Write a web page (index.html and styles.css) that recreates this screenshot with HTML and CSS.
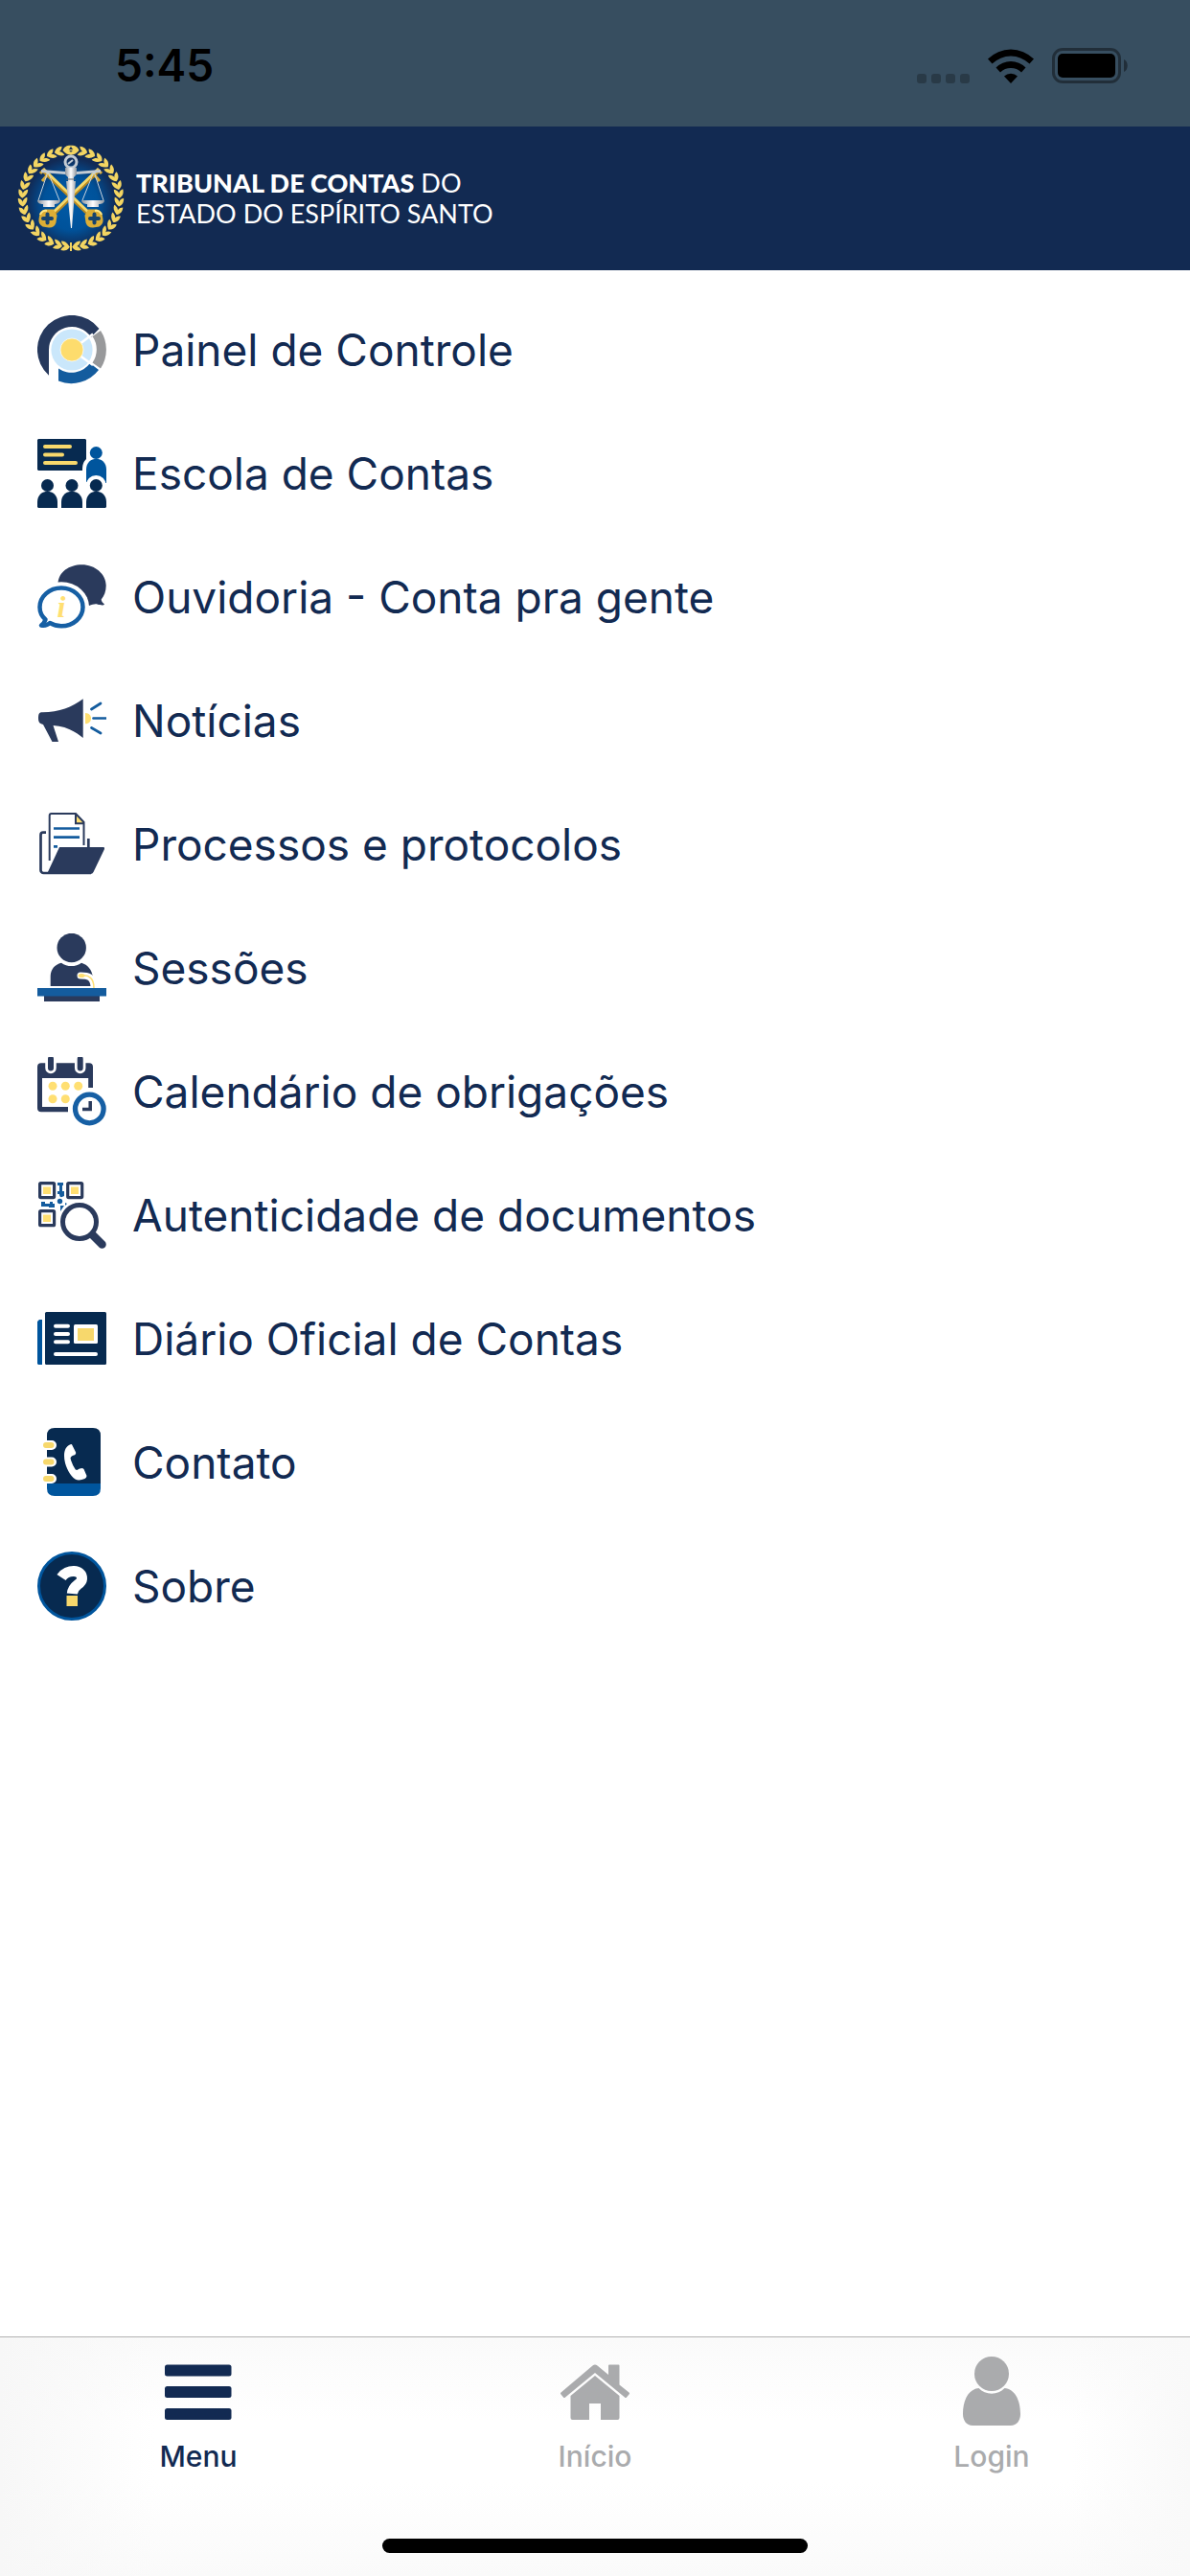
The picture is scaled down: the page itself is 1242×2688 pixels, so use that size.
FILE: index.html
```html
<!DOCTYPE html>
<html lang="pt-BR">
<head>
    <meta charset="UTF-8">
    <meta name="viewport" content="width=device-width, initial-scale=1">
    <title>Tribunal de Contas do Estado do Espírito Santo</title>
    <link rel="stylesheet" href="styles.css">
</head>
<body>
    <div class="status-bar">
        <span class="status-time">5:45</span>
        <div class="status-icons">
            <svg class="signal" viewBox="0 0 55 10" aria-hidden="true">
                <rect x="0" width="10" height="10" rx="3"/>
                <rect x="15" width="10" height="10" rx="3"/>
                <rect x="30" width="10" height="10" rx="3"/>
                <rect x="45" width="10" height="10" rx="3"/>
            </svg>
            <svg class="wifi" viewBox="0 0 48 36" aria-hidden="true">
                <path d="M0 10.500a34 34 0 0 1 48 0l-4.500 5a28 28 0 0 0-39 0z"/>
                <path d="M8.500 19.500a22 22 0 0 1 31 0l-4.500 5a16 16 0 0 0-22 0z"/>
                <path d="M17 28.500a10.500 10.500 0 0 1 14 0l-7 7.500z"/>
            </svg>
            <svg class="battery" viewBox="0 0 80 37" aria-hidden="true">
                <rect class="battery-case" x="1.500" y="1.500" width="69" height="34" rx="9.500"/>
                <rect x="6" y="6" width="60" height="25" rx="5"/>
                <path class="battery-tip" d="M75 12c5 2 5 11 0 13z"/>
            </svg>
        </div>
    </div>

    <header class="header">
        <svg class="emblem" viewBox="0 0 112 112" aria-hidden="true">
            <defs>
                <radialGradient id="disc" cx="50%" cy="55%" r="50%">
                    <stop offset="0" stop-color="#005aa6"/>
                    <stop offset="0.6" stop-color="#00529a"/>
                    <stop offset="1" stop-color="#112a55"/>
                </radialGradient>
                <linearGradient id="silver">
                    <stop offset="0" stop-color="#8e959d"/>
                    <stop offset="0.5" stop-color="#ffffff"/>
                    <stop offset="1" stop-color="#8e959d"/>
                </linearGradient>
                <g id="leaf">
                    <path d="M61 5.500c-2-4-5-5-9-4.500 1 4 5 6 9 4.500z"/>
                    <path d="M61 5.500c-3 4-6 5.500-9.500 5 1-4 5-6.500 9.500-5z"/>
                </g>
                <g id="branch">
                    <use href="#leaf" transform="rotate(4 56 56)"/>
                    <use href="#leaf" transform="rotate(14 56 56)"/>
                    <use href="#leaf" transform="rotate(24 56 56)"/>
                    <use href="#leaf" transform="rotate(34 56 56)"/>
                    <use href="#leaf" transform="rotate(44 56 56)"/>
                    <use href="#leaf" transform="rotate(54 56 56)"/>
                    <use href="#leaf" transform="rotate(64 56 56)"/>
                    <use href="#leaf" transform="rotate(74 56 56)"/>
                    <use href="#leaf" transform="rotate(84 56 56)"/>
                    <use href="#leaf" transform="rotate(94 56 56)"/>
                    <use href="#leaf" transform="rotate(104 56 56)"/>
                    <use href="#leaf" transform="rotate(114 56 56)"/>
                    <use href="#leaf" transform="rotate(124 56 56)"/>
                    <use href="#leaf" transform="rotate(134 56 56)"/>
                    <use href="#leaf" transform="rotate(144 56 56)"/>
                    <use href="#leaf" transform="rotate(154 56 56)"/>
                    <use href="#leaf" transform="rotate(164 56 56)"/>
                    <use href="#leaf" transform="rotate(173 56 56)"/>
                </g>
                <g id="key">
                    <path d="M37 73L86 26" stroke="#b98a22" stroke-width="4"/>
                    <path d="M36 72L85 25" stroke="#f5d96b" stroke-width="3"/>
                    <path d="M80 31l6 7M84 26l4 4" stroke="#d9ac3a" stroke-width="3"/>
                    <path d="M25 72a6 6 0 0 1 6-3l6 0 3 5-1 7a6 6 0 0 1-6 4l-6-1a6 6 0 0 1-3-6z" fill="#dcae36" stroke="#dcae36" stroke-width="3"/>
                    <path d="M24 73a6 6 0 0 1 7-4" fill="none" stroke="#ffe98a" stroke-width="2"/>
                    <path d="M27 77h9M31.500 72.500v9" stroke="#16436e" stroke-width="4" stroke-linecap="round"/>
                </g>
                <g id="pan">
                    <path d="M32 28L22 58M32 28L44 58" stroke="#c8d3dd" stroke-width="1"/>
                    <path d="M21 58h24c0 3-4 4-6 4v3H27v-3c-3 0-6-1-6-4z" fill="url(#silver)"/>
                </g>
            </defs>
            <circle cx="56" cy="56" r="47" fill="url(#disc)"/>
            <g fill="#f3d562">
                <use href="#branch"/>
                <use href="#branch" transform="translate(112 0) scale(-1 1)"/>
                <path d="M51 5h10v1H51zM55 102h2v9h-2z"/>
            </g>
            <use href="#key"/>
            <use href="#key" transform="translate(112 0) scale(-1 1)"/>
            <use href="#pan"/>
            <use href="#pan" transform="translate(112 0) scale(-1 1)"/>
            <path d="M25 26l25 2h12l25-2v3l-25 2H50l-25-2z" fill="#c3cbd3"/>
            <circle cx="56" cy="18" r="6" fill="none" stroke="#c3cbd3" stroke-width="3"/>
            <path d="M53 20l5-4" stroke="#c3cbd3" stroke-width="2"/>
            <path d="M50 24h12v7l-3 3v4h2l-4 49h-1l-5-49h2v-4l-3-3z" fill="url(#silver)"/>
            <path d="M51 36h10" stroke="#57616c" stroke-width="1"/>
        </svg>
        <h1 class="brand"><span><strong>TRIBUNAL DE CONTAS</strong> DO</span><span>ESTADO DO ESPÍRITO SANTO</span></h1>
    </header>

    <main class="content">
        <ul class="menu">
            <li><a href="#painel">
                <svg class="icon" viewBox="0 0 72 72" aria-hidden="true">
                    <path fill="#26395d" d="M64.500 14A36 36 0 1 0 12 62.800V36a24 24 0 0 1 44-13.300z"/>
                    <path fill="#98999b" d="M66 16a36 36 0 0 1 0 39.500l-8.500-6a24 24 0 0 0 0-27.500z"/>
                    <path fill="#145c9e" d="M22 55.500v13A36 36 0 0 0 64 57l-9-7a24 24 0 0 1-33 5.500z"/>
                    <circle cx="36" cy="36" r="21.600" fill="#cae7fb"/>
                    <path d="M36 36l22-16.500M36 36l22 16" stroke="#fff" stroke-width="2.500"/>
                    <circle cx="36" cy="36" r="12" fill="#fddc6d" stroke="#fff" stroke-width="0.700"/>
                </svg>
                <span>Painel de Controle</span>
            </a></li>
            <li><a href="#escola">
                <svg class="icon" viewBox="0 0 72 72" aria-hidden="true">
                    <path fill="#072a50" d="M1 0h49l1 1v20c-3 3-4 6-4 12H1l-1-1V1z"/>
                    <path d="M8 8h26M8 16.500h18M8 25h32" stroke="#f7d86c" stroke-width="4" stroke-linecap="round"/>
                    <g fill="#00559d">
                        <circle cx="61.300" cy="14.500" r="6.500"/>
                        <path d="M51 45V32c0-15 21-15 21 0v14z"/>
                    </g>
                    <circle cx="61.300" cy="48.500" r="10.500" fill="#fff"/>
                    <g fill="#072a50">
                        <circle cx="10.500" cy="48.500" r="6.500"/>
                        <circle cx="36" cy="48.500" r="6.500"/>
                        <circle cx="61.300" cy="48.500" r="6.500"/>
                        <path d="M0 71v-5c0-15 21-15 21 0v6H1z"/>
                        <path d="M25 72v-6c0-15 22-15 22 0v6z"/>
                        <path d="M51 72v-6c0-15 21-15 21 0v5l-1 1z"/>
                    </g>
                </svg>
                <span>Escola de Contas</span>
            </a></li>
            <li><a href="#ouvidoria">
                <svg class="icon" viewBox="0 0 72 72" aria-hidden="true">
                    <path fill="#2a3a5c" d="M21.500 22C22 10 33 2.300 46.500 2.300S71.700 12 71.700 24c0 6-2 11-5 14.500 0 2 2 4 3.300 5-1 1.500-4 1-7.500 0-3-.5-5 .5-8.500 1.500z"/>
                    <ellipse cx="25" cy="46.300" rx="29" ry="26" fill="#fff"/>
                    <path fill="none" stroke="#165fa4" stroke-width="4.500" stroke-linejoin="round" d="M25 26.500c-12.500 0-22.500 9-22.500 20 0 5 2 9.500 6 13-1 3-3 5-4.500 6 3 .5 7-.5 9-2.500 4 2.300 8 3.300 12 3.300 12.500 0 22.500-9 22.500-19.800S37.500 26.500 25 26.500z"/>
                    <text x="25" y="57" class="icon-letter">i</text>
                </svg>
                <span>Ouvidoria - Conta pra gente</span>
            </a></li>
            <li><a href="#noticias">
                <svg class="icon" viewBox="0 0 72 72" aria-hidden="true">
                    <path fill="#2a3a5c" d="M4 27.200c18 .3 32-5 43.700-13.900V54C38 46 28 41.500 16.500 41L22 58h-6.500L6 40C2 39 1 37 1 33s1-5.500 3-5.800z"/>
                    <path fill="#ffdf72" d="M50 28c8 0 8 11.300 0 11.300z"/>
                    <path d="M56.500 24l9.500-6M58.500 33.500h13M56.500 43.500l9.500 5.500" stroke="#145c9e" stroke-width="2.700" stroke-linecap="round"/>
                </svg>
                <span>Notícias</span>
            </a></li>
            <li><a href="#processos">
                <svg class="icon" viewBox="0 0 72 72" aria-hidden="true">
                    <path fill="#ffdf72" d="M40 5v9h9z"/>
                    <g fill="none" stroke="#2a3a5c">
                        <path stroke-width="2" d="M12.700 53V6a2 2 0 0 1 2-2H40l8.500 9v24M40 4v10.300h9"/>
                        <path stroke-width="2.700" d="M9 23.700H6a2.500 2.500 0 0 0-2.500 2.500V63a3 3 0 0 0 3 3H56M53.300 30v9"/>
                    </g>
                    <path d="M17 19.500h27M17 28.700h27M17 38.300h4" stroke="#145c9e" stroke-width="2.700"/>
                    <path fill="#2a3a5c" d="M23 39h46q1.500 0 1 2L58.500 65q-1 2-3 2H10z"/>
                </svg>
                <span>Processos e protocolos</span>
            </a></li>
            <li><a href="#sessoes">
                <svg class="icon" viewBox="0 0 72 72" aria-hidden="true">
                    <circle cx="35.700" cy="15" r="15.200" fill="#2a3a5c"/>
                    <path fill="#2a3a5c" d="M25 30.700c6 4.500 15 4.500 21 0 7 2 11 8 11.700 14L56 55H13.700V45c0-7 4-12.500 11.300-14.300z"/>
                    <path fill="none" stroke="#fff" stroke-width="7" stroke-linecap="round" d="M45 44c8 0 13 1 14 11"/>
                    <path fill="none" stroke="#ffdf72" stroke-width="1.500" d="M46 44c8-1 13 3 13 13"/>
                    <ellipse cx="46" cy="44" rx="3.500" ry="2" fill="#ffdf72"/>
                    <path fill="#2a3a5c" d="M7 65h58v6H7z"/>
                    <path fill="#145c9e" d="M0 57h72v8.500H0z"/>
                </svg>
                <span>Sessões</span>
            </a></li>
            <li><a href="#calendario">
                <svg class="icon" viewBox="0 0 72 72" aria-hidden="true">
                    <path fill="#2a3a5c" fill-rule="evenodd" d="M4 6.300h50q4 0 4 4V32h-4.800V22H5v30h27v5.300H4q-4 0-4-4v-43q0-4 4-4z"/>
                    <path d="M14 3v8.500M44.700 3v8.500" stroke="#fff" stroke-width="11.500" stroke-linecap="round"/>
                    <path d="M14 2v9.500M44.700 2v9.500" stroke="#2a3a5c" stroke-width="6" stroke-linecap="round"/>
                    <g fill="#ffdf72">
                        <circle cx="16" cy="30.300" r="4.500"/>
                        <circle cx="29.300" cy="30.300" r="4.500"/>
                        <circle cx="42.700" cy="30.300" r="4.500"/>
                        <circle cx="16" cy="43.700" r="4.500"/>
                        <circle cx="29.300" cy="43.700" r="4.500"/>
                    </g>
                    <circle cx="54.300" cy="54" r="14.800" fill="#fff" stroke="#165fa4" stroke-width="5.300"/>
                    <path fill="none" stroke="#2a3a5c" stroke-width="3.500" d="M55.200 46v8.500H47"/>
                </svg>
                <span>Calendário de obrigações</span>
            </a></li>
            <li><a href="#autenticidade">
                <svg class="icon" viewBox="0 0 72 72" aria-hidden="true">
                    <g fill="none" stroke="#2a3a5c" stroke-width="3.200">
                        <rect x="2.600" y="2.600" width="15" height="15" rx="1"/>
                        <rect x="31.700" y="2.600" width="15" height="15" rx="1"/>
                        <rect x="2.600" y="31.700" width="15" height="15" rx="1"/>
                    </g>
                    <g fill="#ffdf72">
                        <rect x="6" y="6.500" width="8" height="7.500"/>
                        <rect x="35" y="6.500" width="8" height="7.500"/>
                        <rect x="6" y="35.500" width="8" height="7.500"/>
                    </g>
                    <g fill="#145c9e">
                        <path d="M21 2h6v3h-1v6h2v5q-5 3-5-2h-2v-3h2V5h-2z"/>
                        <path d="M4 22h4v2h5v-2h3v2h2v4h-6v-1H4z"/>
                        <circle cx="23.500" cy="21.500" r="2.700"/>
                        <path d="M24 26h4l-4 6zM29 23l2 1-2 2z"/>
                    </g>
                    <path d="M58 57l9.500 9.500" stroke="#2a3a5c" stroke-width="8.500" stroke-linecap="round"/>
                    <circle cx="44" cy="43" r="17.500" fill="#fff" stroke="#2a3a5c" stroke-width="5"/>
                </svg>
                <span>Autenticidade de documentos</span>
            </a></li>
            <li><a href="#diario">
                <svg class="icon" viewBox="0 0 72 72" aria-hidden="true">
                    <path fill="#00559d" d="M2 16h3v47H1l-1-1V18z"/>
                    <rect x="8" y="8" width="64" height="55" rx="1.500" fill="#072a50"/>
                    <path d="M19 22.700h13M19 31h13M19 39.300h13M19 52h42" stroke="#fff" stroke-width="4" stroke-linecap="round"/>
                    <rect x="38" y="21" width="25" height="20" rx="1.500" fill="#fff"/>
                    <rect x="42" y="25" width="17" height="13" fill="#f7d86c"/>
                </svg>
                <span>Diário Oficial de Contas</span>
            </a></li>
            <li><a href="#contato">
                <svg class="icon" viewBox="0 0 72 72" aria-hidden="true">
                    <path fill="#072a50" d="M18 0h40q8 0 8 8v50H10V8q0-8 8-8z"/>
                    <path fill="#00559d" d="M10 58h56v5q0 8-8 8H18q-8 0-8-8z"/>
                    <path d="M9 18h6M9 35.500h6M9 53h6" stroke="#fff" stroke-width="10" stroke-linecap="round"/>
                    <path d="M9 18h5.500M9 35.500h5.500M9 53h5.500" stroke="#f7d86c" stroke-width="6" stroke-linecap="round"/>
                    <path fill="#fff" d="M34.500 17.200q1.500-.5 2 1l3.500 7q.7 2-1 3-4 1-4.500 3.300 1.500 6.500 5.300 12l1.500.5q2.700-2 5.700-2l1.500 1 3 7q0 2-2 3-6 2.500-10 .5C33 49 28 38 28 29c0-6 2-10 6.500-11.800z"/>
                </svg>
                <span>Contato</span>
            </a></li>
            <li><a href="#sobre">
                <svg class="icon" viewBox="0 0 72 72" aria-hidden="true">
                    <circle cx="36" cy="36" r="34.500" fill="#072a50" stroke="#00559d" stroke-width="3"/>
                    <path fill="none" stroke="#fff" stroke-width="11" d="M25 27c6-9 22-9 21.500 1.500C46 35 37 34 36.300 44"/>
                    <rect x="30.500" y="46" width="11.500" height="11" fill="#f7d86c"/>
                </svg>
                <span>Sobre</span>
            </a></li>
        </ul>
    </main>

    <nav class="tab-bar">
        <div class="tabs">
            <a href="#menu" class="tab active">
                <svg class="icon" viewBox="0 0 72 72" aria-hidden="true">
                    <rect x="1" y="8.500" width="69.500" height="12" rx="2.500"/>
                    <rect x="1" y="31" width="69.500" height="12" rx="2.500"/>
                    <rect x="1" y="54" width="69.500" height="12" rx="2.500"/>
                </svg>
                <span>Menu</span>
            </a>
            <a href="#inicio" class="tab">
                <svg class="icon" viewBox="0 0 72 72" aria-hidden="true">
                    <path d="M33.500 9.500q2.500-2 5 0L50 19V9.500q0-1 1-1h9.500q1 0 1 1v20l10 8q1 1 0 2l-2.500 3q-1 1-2 0L36 17 5 42.500q-1 1-2 0l-2.500-3q-1-1 0-2z"/>
                    <path d="M36 20l25.500 21v23q0 2-2 2H42V49H30v17H12.500q-2 0-2-2V41z"/>
                </svg>
                <span>Início</span>
            </a>
            <a href="#login" class="tab">
                <svg class="icon" viewBox="0 0 72 72" aria-hidden="true">
                    <ellipse cx="36" cy="18" rx="18" ry="18"/>
                    <path d="M22.500 33c7 7.500 20 7.500 27 0C60 34 66 45 66 60c0 7-4 12-10 12H16C10 72 6 67 6 60c0-15 6-26 16.500-27z"/>
                </svg>
                <span>Login</span>
            </a>
        </div>
        <div class="home-indicator"></div>
    </nav>
</body>
</html>
```
FILE: styles.css
```css
:root {
    --color-navy: #122a52;
    --color-status: #374e60;
    --color-muted: #aaabad;
    --color-border: #b2b2b2;
}

* {
    box-sizing: border-box;
}

body {
    margin: 0;
    min-height: 100vh;
    display: flex;
    flex-direction: column;
    background-color: #fff;
    color: var(--color-navy);
    font-family: Inter, "Liberation Sans", sans-serif;
}

a {
    color: inherit;
    text-decoration: none;
}

svg {
    display: block;
    flex-shrink: 0;
}

/* Status bar */
.status-bar {
    display: flex;
    align-items: center;
    justify-content: space-between;
    height: 132px;
    padding: 4px 64px 0 120px;
    background-color: var(--color-status);
    color: #000;
}

.status-time {
    font-size: 46px;
    font-weight: 600;
    line-height: 56px;
}

.status-icons {
    display: flex;
    align-items: flex-end;
    gap: 19px;
}

.signal {
    width: 55px;
    height: 10px;
    opacity: 0.25;
}

.wifi {
    width: 48px;
    height: 36px;
}

.battery {
    width: 80px;
    height: 37px;
}

.battery-case {
    fill: none;
    stroke: #000;
    stroke-width: 3px;
    opacity: 0.4;
}

.battery-tip {
    opacity: 0.4;
}

/* Header */
.header {
    display: flex;
    align-items: center;
    gap: 12px;
    height: 150px;
    padding: 0 18px;
    background-color: var(--color-navy);
    color: #fff;
}

.emblem {
    width: 112px;
    height: 112px;
}

.brand {
    margin: 0;
    font-family: Lato, "Liberation Sans", sans-serif;
    font-size: 27px;
    font-weight: 400;
    line-height: 32px;
}

.brand span {
    display: block;
}

.brand strong {
    font-weight: 900;
}

/* Menu */
.content {
    flex: 1;
    padding: 18px 0;
}

.menu {
    margin: 0;
    padding: 0;
    list-style: none;
}

.menu a {
    display: flex;
    align-items: center;
    gap: 27px;
    height: 129px;
    padding: 0 39px;
    font-size: 46px;
    line-height: 56px;
}

.icon {
    width: 72px;
    height: 72px;
}

.icon-letter {
    fill: #ffdf72;
    font-family: "Liberation Serif", serif;
    font-size: 32px;
    font-style: italic;
    font-weight: 700;
    text-anchor: middle;
}

/* Bottom tabs */
.tab-bar {
    border-top: 1px solid var(--color-border);
    background:
        linear-gradient(90deg, #f7f7f7, transparent 13%, transparent 90%, #f9f9f9),
        linear-gradient(#fafafa, #fff 35%, #fff 60%, #fafafa);
}

.tabs {
    display: grid;
    grid-template-columns: repeat(3, 1fr);
    padding-top: 20px;
}

.tab {
    display: flex;
    flex-direction: column;
    align-items: center;
    gap: 14px;
    color: var(--color-muted);
    font-size: 30px;
    font-weight: 500;
    line-height: 36px;
}

.tab.active {
    color: var(--color-navy);
}

.tab svg {
    fill: currentColor;
}

.home-indicator {
    width: 444px;
    height: 15px;
    margin: 68px auto 24px;
    border-radius: 8px;
    background-color: #000;
}
```
